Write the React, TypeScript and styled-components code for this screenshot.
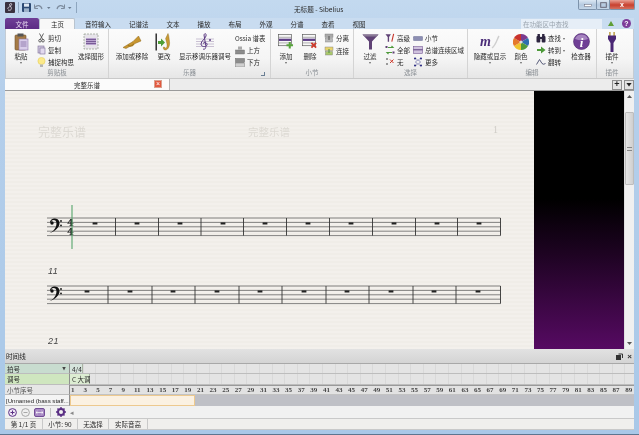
import React from "react";
import styled, { createGlobalStyle } from "styled-components";

const Global = createGlobalStyle`
  html, body { margin: 0; padding: 0; background: #b9d2ec; }
  body { font-family: "Noto Sans CJK SC", "Liberation Sans", sans-serif; font-size: 6.5px; color: #2a2a2a; }
  * { box-sizing: border-box; }
`;

const Window = styled.div`
  width: 639px; height: 435px; overflow: hidden;
  display: flex; flex-direction: column;
  padding: 0 5px 4px 5px;
  background: linear-gradient(180deg, #c3d9ef 0%, #b5cfeb 20%, #a9c8e8 100%);
  border-bottom: 1px solid #5d7690;
  filter: blur(0.3px);
`;

const TitleBar = styled.div`
  height: 18px; flex: none; display: flex; align-items: flex-start; position: relative;
`;
const Quick = styled.div`
  display: flex; align-items: center; gap: 3px; height: 14px; padding-top: 1px;
`;
const QuickSep = styled.div`
  width: 1px; height: 11px; background: #8ea6bf;
`;
const WindowTitle = styled.div`
  position: absolute; left: 289px; top: 4px; font-size: 6.6px; color: #2a2a2a; white-space: nowrap;
`;
const Caption = styled.div`
  margin-left: auto; display: flex; height: 10px; margin-right: -1px;
`;
const CapBtn = styled.div<{ $w: number; $red?: boolean }>`
  width: ${p => p.$w}px; height: 10px; display: flex; align-items: center; justify-content: center;
  border: 1px solid #7d93ab; border-top: none; margin-left: -1px;
  background: ${p => p.$red ? "linear-gradient(180deg,#e9a195,#c8402f 55%,#d4705f)" : "linear-gradient(180deg,#dbe7f3,#b4c9df 55%,#c4d6e8)"};
  border-radius: 0 0 2px 2px; color: #fff; font-size: 7px; font-weight: bold;
  font-family: "Liberation Sans", sans-serif;
`;

const TabRow = styled.div`
  height: 11px; flex: none; display: flex; align-items: stretch; position: relative;
  background: #c9dcf0;
`;
const FileTab = styled.div`
  width: 34px; display: flex; align-items: center; justify-content: center;
  background: linear-gradient(180deg, #6f3f96, #5d2c85); color: #eadcf2; border-radius: 2px 2px 0 0;
`;
const Tab = styled.div<{ $active?: boolean }>`
  display: flex; align-items: center; padding: 0 ${p => p.$active ? "10px" : "9px"};
  padding-left: ${p => p.$active ? "11px" : "9px"};
  color: #2a2a2a;
  background: ${p => p.$active ? "#f8f8f8" : "transparent"};
  border-radius: 2px 2px 0 0;
  ${p => p.$active ? "border:1px solid #b9c4cf;border-bottom:none;margin-right:1px;" : ""}
`;
const SearchArea = styled.div`
  margin-left: auto; display: flex; align-items: center; gap: 3px;
`;
const SearchBox = styled.div`
  width: 81px; height: 10px; background: #e6eef7; color: #9aa4ae; padding-left: 2px;
  display: flex; align-items: center;
`;
const Help = styled.div`
  width: 9px; height: 9px; border-radius: 50%; background: #7d3c9a; color: #fff;
  display: flex; align-items: center; justify-content: center; font-size: 7px; font-weight: bold;
  font-family: "Liberation Sans", sans-serif; margin-left: 5px; margin-right: 3px;
`;
const UpTri = styled.div`
  width: 0; height: 0; margin-left: 3px; border-left: 3.5px solid transparent; border-right: 3.5px solid transparent;
  border-bottom: 5px solid #5f9e35;
`;

const Ribbon = styled.div`
  height: 49px; flex: none; display: flex;
  background: linear-gradient(180deg, #fbfbfb 0%, #f5f5f5 60%, #e6e6e6 100%);
  border-left: 1px solid #c4ccd4; border-right: 1px solid #c4ccd4;
`;
const Group = styled.div<{ $w: number; $nosep?: boolean }>`
  width: ${p => p.$w}px; flex: none; display: flex; flex-direction: column; position: relative;
  border-right: ${p => p.$nosep ? "none" : "1px solid #d4d4d4"};
`;
const GroupBody = styled.div<{ $pl?: number }>`
  flex: 1; display: flex; padding-top: 3px; padding-left: ${p => p.$pl ?? 0}px; min-height: 0;
`;
const GroupLabel = styled.div`
  height: 10px; flex: none; text-align: center; line-height: 9px; color: #8a8f94;
`;
const Launcher = styled.div`
  position: absolute; right: 5px; bottom: 2px; width: 4px; height: 4px;
  border-right: 1px solid #6a7f94; border-bottom: 1px solid #6a7f94;
`;
const Big = styled.div<{ $w: number }>`
  width: ${p => p.$w}px; flex: none; display: flex; flex-direction: column; align-items: center;
`;
const BigIcon = styled.div`
  height: 19px; display: flex; align-items: center; justify-content: center;
`;
const BigText = styled.div`
  height: 10px; line-height: 10px; white-space: nowrap; color: #2a2a2a;
`;
const Caret = styled.div`
  width: 0; height: 0; margin-top: 1px;
  border-left: 1.5px solid transparent; border-right: 1.5px solid transparent; border-top: 2px solid #666;
`;
const Col = styled.div<{ $w: number; $ml?: number }>`
  width: ${p => p.$w}px; flex: none; margin-left: ${p => p.$ml ?? 0}px; display: flex; flex-direction: column;
`;
const Small = styled.div`
  height: 12.5px; display: flex; align-items: center; gap: 2px; white-space: nowrap; color: #2a2a2a;
`;
const Ossia = styled(Small)`
  font-size: 6.4px;
`;
const SmallIcon = styled.div`
  width: 10px; height: 10px; flex: none; display: flex; align-items: center; justify-content: center;
`;

const DocBar = styled.div`
  height: 13px; flex: none; display: flex; align-items: stretch;
  background: #ececec; border-top: 1px solid #c9c9c9; border-bottom: 1px solid #9a9a9a;
`;
const DocTab = styled.div`
  width: 165px; background: #fbfbfb; border-right: 1px solid #b5b5b5; position: relative;
  display: flex; align-items: center; justify-content: center; padding-right: 0;
`;
const DocClose = styled.div`
  position: absolute; left: 149px; top: 1px; width: 8px; height: 8px; background: #e2583e; border: 1px solid #d9a08f;
  color: #fff; font-size: 7px; line-height: 6px; text-align: center; font-family: "Liberation Sans", sans-serif;
`;
const DocTools = styled.div`
  margin-left: auto; display: flex; gap: 2px; align-items: center;
`;
const DocBtn = styled.div`
  width: 10px; height: 10px; background: #e3e3e3; border: 1px solid #8f8f8f; color: #222;
  display: flex; align-items: center; justify-content: center; font-size: 9px; font-weight: bold;
  font-family: "Liberation Sans", sans-serif; line-height: 1;
`;
const DownTri = styled.div`
  width: 6px; height: 4px; background: #222; clip-path: polygon(0 0, 100% 0, 50% 100%);
`;

const Workspace = styled.div`
  height: 258px; flex: none; display: flex; overflow: hidden;
`;
const Page = styled.div`
  width: 529px; flex: none; overflow: hidden; display: flex; flex-direction: column;
  background: repeating-linear-gradient(180deg, #f3f0ec 0, #f3f0ec 2px, #f0ede8 2px, #f0ede8 4px);
`;
const PageHead = styled.div`
  margin-top: 32px; height: 16px; flex: none; display: flex; align-items: center; color: #dfdcd6; position: relative;
`;
const HeadLeft = styled.div`
  margin-left: 33px; width: 210px; font-size: 12px; color: #dcd9d3;
`;
const HeadMid = styled.div`
  font-size: 10.5px; color: #dcd9d3;
`;
const HeadNum = styled.div`
  margin-left: auto; margin-right: 36px; font-size: 10px; margin-top: -4px; color: #cfccc6;
  font-family: "Liberation Serif", serif;
`;
const BarNo = styled.div<{ $mt: number }>`
  margin: ${p => p.$mt}px 0 0 43px; height: 12px; flex: none; font-size: 9px; font-style: italic; line-height: 12px;
  font-family: "Liberation Sans", sans-serif; color: #444; letter-spacing: 0.5px;
`;
const StaffSvg = styled.svg<{ $mt?: number }>`
  display: block; flex: none; margin-top: ${p => p.$mt ?? 0}px;
`;
const Panel = styled.div`
  width: 90px; flex: none; background: linear-gradient(180deg, #000 0%, #000 42%, #1c0320 62%, #560a62 100%);
`;
const Scroll = styled.div`
  width: 10px; flex: none; background: #f0f0f0; display: flex; flex-direction: column; align-items: center; border-left: 1px solid #e0e0e0;
`;
const ScrollArrow = styled.div<{ $down?: boolean }>`
  width: 5px; height: 3px; margin: ${p => p.$down ? "auto 0 4px" : "4px 0 0"}; background: #555;
  clip-path: ${p => p.$down ? "polygon(0 0,100% 0,50% 100%)" : "polygon(50% 0,100% 100%,0 100%)"};
`;
const ScrollThumb = styled.div`
  width: 9px; height: 73px; margin-top: 14px; background: linear-gradient(90deg, #e6e6e6, #cfcfcf);
  border: 1px solid #bdbdbd; border-radius: 1px; display: flex; align-items: center; justify-content: center;
`;
const Grip = styled.div`
  width: 5px; height: 4px; border-top: 1px solid #888; border-bottom: 1px solid #888;
`;

const Timeline = styled.div`
  height: 70px; flex: none; display: flex; flex-direction: column; background: #f0f0f0;
`;
const TimelineHead = styled.div`
  height: 15px; flex: none; display: flex; align-items: center; padding-left: 1px;
  background: linear-gradient(180deg, #e2e2e2, #d4d4d4); border-bottom: 1px solid #a8a8a8; color: #222;
  font-size: 6.6px;
`;
const HeadTools = styled.div`
  margin-left: auto; display: flex; gap: 4px; padding-right: 2px; align-items: center; color: #333;
  font-family: "Liberation Sans", sans-serif; font-size: 8px; font-weight: bold;
`;
const TRow = styled.div<{ $h: number }>`
  height: ${p => p.$h}px; flex: none; display: flex; align-items: stretch;
`;
const TLabel = styled.div<{ $bg: string; $c?: string }>`
  width: 65px; flex: none; background: ${p => p.$bg}; color: ${p => p.$c ?? "#2a2a2a"}; display: flex; align-items: center;
  padding-left: 2px; border-right: 1px solid #8f8f8f; border-bottom: 1px solid #bdbdbd; white-space: nowrap; overflow: hidden;
`;
const StaffName = styled(TLabel)`
  font-family: "Liberation Sans", sans-serif; font-size: 6.2px; padding-left: 1px; letter-spacing: -0.05px;
`;
const FilterMark = styled.div`
  margin-left: auto; margin-right: 3px; width: 4px; height: 4px; background: #444; clip-path: polygon(0 0, 100% 0, 50% 100%);
`;
const Track = styled.div`
  flex: 1; display: flex; align-items: stretch; border-bottom: 1px solid #bdbdbd;
  background-color: #e4e4e4;
  background-image: repeating-linear-gradient(90deg, #d9d9d9 0, #d9d9d9 1px, transparent 1px, transparent 12.6px);
`;
const Chip = styled.div<{ $w: number; $bg: string }>`
  width: ${p => p.$w}px; background: ${p => p.$bg}; border-right: 1px solid #a9b5a4; display: flex; align-items: center; padding-left: 2px; color: #2a2a2a; white-space: nowrap;
`;
const Numbers = styled.div`
  flex: 1; display: flex; background: #e2e2e2; border-top: 1px solid #9a9a9a; border-bottom: 1px solid #c3c3c3; overflow: hidden;
`;
const Num = styled.div`
  width: 12.6px; flex: none; padding-left: 1px; line-height: 9px; color: #444; font-weight: bold; font-size: 7px; letter-spacing: 0;
  font-family: "Liberation Serif", serif;
`;
const Clip = styled.div`
  width: 125px; flex: none; background: #fbf1e2; border: 1px solid #edc98f;
`;
const ClipRest = styled.div`
  flex: 1; background: #bfc0c6;
`;
const ToolRow = styled.div`
  height: 13px; flex: none; display: flex; align-items: center; padding-left: 3px; gap: 4px;
  background: #f1f1f1; border-bottom: 1px solid #c9c9c9; color: #888;
`;
const ToolSep = styled.div`
  width: 1px; height: 9px; background: #c2c2c2; margin: 0 1px;
`;
const Status = styled.div`
  height: 11px; flex: none; display: flex; background: #f0efed; border-bottom: 1px solid #c9c9c9;
`;
const StatusCell = styled.div<{ $w: number }>`
  width: ${p => p.$w}px; flex: none; display: flex; align-items: center; justify-content: center;
  border-right: 1px solid #c9c9c9; color: #2a2a2a; white-space: nowrap;
`;

/* ---------- icons ---------- */
const Clipboard = () => (
  <svg width="15" height="18" viewBox="0 0 15 18">
    <rect x="1" y="2" width="11" height="15" rx="1" fill="#a57b47" stroke="#6f5230" strokeWidth=".6" />
    <rect x="3.5" y="0.5" width="6" height="3" fill="#555" />
    <rect x="5" y="6" width="9" height="11" fill="#d9cdea" stroke="#8b76a8" strokeWidth=".6" />
    <path d="M6.5 9h6M6.5 11h6M6.5 13h6" stroke="#7d64a0" strokeWidth=".8" />
  </svg>
);
const Scissors = () => (
  <svg width="9" height="10" viewBox="0 0 9 10" fill="none" stroke="#555" strokeWidth=".9">
    <path d="M2.5 0.5L5.5 6M6.5 0.5L3.5 6" />
    <circle cx="3" cy="7.7" r="1.3" />
    <circle cx="6" cy="7.7" r="1.3" />
  </svg>
);
const Copy = () => (
  <svg width="9" height="10" viewBox="0 0 9 10">
    <rect x="1" y="1" width="6" height="7" fill="#cfc6de" stroke="#7e6f96" strokeWidth=".6" />
    <rect x="3" y="3" width="5" height="6" fill="#e2d9ee" stroke="#7e6f96" strokeWidth=".6" />
  </svg>
);
const Bulb = () => (
  <svg width="9" height="11" viewBox="0 0 9 11">
    <circle cx="4.5" cy="4" r="3.6" fill="#fbe98a" stroke="#e1c94f" strokeWidth=".5" />
    <rect x="3" y="7.5" width="3" height="2.5" fill="#b4b4b4" />
  </svg>
);
const SelectGraphic = () => (
  <svg width="16" height="17" viewBox="0 0 16 17">
    <rect x="1" y="1" width="14" height="15" fill="#e7e4ea" stroke="#8f9c8a" strokeWidth=".7" strokeDasharray="2 1" />
    <rect x="3" y="5" width="10" height="7" fill="#b9a3cf" />
    <path d="M3 6.5h10M3 8.5h10M3 10.5h10" stroke="#5b3e7c" strokeWidth=".7" />
  </svg>
);
const Trumpet = () => (
  <svg width="20" height="14" viewBox="0 0 20 14">
    <path d="M1 12.5L11 6.5L16.5 1L19 6L13 8.5L4 13.5Z" fill="#c8962f" stroke="#8c6516" strokeWidth=".5" />
    <path d="M6 10q3 2.5 6 -1" stroke="#a57a1f" strokeWidth="1.2" fill="none" />
  </svg>
);
const ChangeInst = () => (
  <svg width="18" height="18" viewBox="0 0 18 18">
    <rect x="0.5" y="0.5" width="1.4" height="17" fill="#222" />
    <path d="M3 8h3V5.5L10 9.5L6 13.5V11H3Z" fill="#4f9e38" />
    <path d="M13 0.5c1 2 1 5 1.5 8c.5 4 -1 8 -4 8.5c-2 .3 -2.5 -2 -2 -3l1.5 .5c0 1 1.5 1 2 -1c.5 -2 -.5 -4 -1.4 -8z" fill="#c99a34" stroke="#86651a" strokeWidth=".4" />
  </svg>
);
const Transpose = () => (
  <svg width="18" height="18" viewBox="0 0 18 18" fill="none">
    <path d="M0 6h18M0 8.5h18M0 11h18M0 13.5h18" stroke="#a99bb9" strokeWidth=".6" />
    <path d="M7 16c2 1 3.5 -1 2.5 -5L8 2c.5 -2 2.5 -2 2 1c-.4 2.5 -5 5 -5 8c0 3 5 3.5 6 1c.8 -2 -2.5 -3.5 -4 -1.5" stroke="#5b3a82" strokeWidth="1" />
    <circle cx="14" cy="7" r="1" fill="#5b3a82" />
  </svg>
);
const StaffUp = ({ down }: { down?: boolean }) => (
  <svg width="10" height="9" viewBox="0 0 10 9">
    {down ? <rect x="0.5" y="0.5" width="9" height="4" fill="#8c8c8c" stroke="#555" strokeWidth=".4" /> : <rect x="3" y="0.5" width="4" height="3" fill="#aaa" />}
    <rect x="0.5" y={down ? 5 : 4} width="9" height="4" fill={down ? "#cfcfcf" : "#8c8c8c"} stroke="#666" strokeWidth=".4" />
  </svg>
);
const BarIcon = ({ del }: { del?: boolean }) => (
  <svg width="16" height="15" viewBox="0 0 17 16">
    <rect x="0.5" y="0.5" width="14" height="12" fill="#f7f7f7" stroke="#555" strokeWidth=".7" />
    <path d="M1 3.5h13M1 9.5h13" stroke="#777" strokeWidth=".6" />
    <rect x="1" y="5" width="13" height="2.4" fill="#5d3d86" />
    {del
      ? <path d="M10 9.5l5 5M15 9.5l-5 5" stroke="#cf3a2c" strokeWidth="2" />
      : <path d="M12.5 8.5v7M9 12h7" stroke="#58a33c" strokeWidth="2.2" />}
  </svg>
);
const SplitIcon = ({ join }: { join?: boolean }) => (
  <svg width="10" height="10" viewBox="0 0 10 10">
    <rect x="1" y="1" width="8" height="3.5" fill={join ? "#e7d36d" : "#a9a9a9"} stroke="#777" strokeWidth=".4" />
    <rect x="1.5" y="5.5" width="7" height="3.5" fill={join ? "#a9c86b" : "#b9b9b9"} stroke="#777" strokeWidth=".4" />
    <path d="M5 3v4" stroke={join ? "#4f8f35" : "#555"} strokeWidth="1" />
  </svg>
);
const Funnel = () => (
  <svg width="17" height="17" viewBox="0 0 17 17">
    <path d="M0.5 1.5h16L10 8.5V16.5H7V8.5Z" fill="#5f4275" />
    <path d="M0.5 1.5h16l-2 2H2.5Z" fill="#8a7a96" />
  </svg>
);
const Advanced = () => (
  <svg width="11" height="10" viewBox="0 0 11 10">
    <path d="M0.5 1h6L4.5 4v5H3V4Z" fill="#5f4275" />
    <path d="M9.5 0.5L7.5 9" stroke="#c7332a" strokeWidth="1.2" />
  </svg>
);
const AllIcon = () => (
  <svg width="10" height="10" viewBox="0 0 10 10" fill="none">
    <path d="M3 2.5h5l-1.5-1.5M7 7.5H2l1.5 1.5" stroke="#4e9a3a" strokeWidth="1.1" />
    <rect x="0.5" y="1" width="2" height="2" fill="#5f4275" />
    <rect x="7.5" y="6.5" width="2" height="2" fill="#5f4275" />
  </svg>
);
const NoneIcon = () => (
  <svg width="10" height="10" viewBox="0 0 10 10">
    <rect x="1" y="1" width="2" height="2" fill="#999" />
    <rect x="1" y="6" width="2" height="2" fill="#999" />
    <path d="M5 2.5l3.5 3.5M8.5 2.5L5 6" stroke="#cf3a2c" strokeWidth="1" />
  </svg>
);
const MiniBar = () => (
  <svg width="10" height="5" viewBox="0 0 10 5"><rect x="0.3" y="0.3" width="9.4" height="4.4" rx="1" fill="#8d8fb3" stroke="#6f7196" strokeWidth=".4" /></svg>
);
const ScoreRange = () => (
  <svg width="10" height="8" viewBox="0 0 10 8">
    <rect x="0.3" y="0.3" width="9.4" height="7.4" fill="#cfc2de" stroke="#6c4f8c" strokeWidth=".5" />
    <path d="M0.3 3.8h9.4" stroke="#5c3f7e" strokeWidth="1" />
  </svg>
);
const MoreIcon = () => (
  <svg width="10" height="10" viewBox="0 0 10 10">
    <path d="M2 1L8 5L2 9M8 1L2 5L8 9" stroke="#23237e" strokeWidth=".6" fill="none" strokeDasharray="1 .7" />
    <circle cx="2" cy="1.5" r="1" fill="#23237e" /><circle cx="8" cy="1.5" r="1" fill="#23237e" />
    <circle cx="2" cy="8.5" r="1" fill="#23237e" /><circle cx="8" cy="8.5" r="1" fill="#23237e" />
  </svg>
);
const Dyn = () => (
  <svg width="20" height="14" viewBox="0 0 20 14">
    <path d="M12 13C16 10 17 4 19 1" stroke="#cfcfcf" strokeWidth="1.4" fill="none" />
    <text x="0" y="11" fontFamily="Liberation Serif, serif" fontStyle="italic" fontWeight="bold" fontSize="14" fill="#4b2d78">m</text>
  </svg>
);
const Wheel = () => (
  <svg width="16" height="16" viewBox="0 0 16 16">
    <path d="M8 8L8 0A8 8 0 0 1 15 4Z" fill="#7a3b8f" />
    <path d="M8 8L15 4A8 8 0 0 1 15 12Z" fill="#2f6fb0" />
    <path d="M8 8L15 12A8 8 0 0 1 8 16Z" fill="#4f9a3c" />
    <path d="M8 8L8 16A8 8 0 0 1 1 12Z" fill="#f0c52e" />
    <path d="M8 8L1 12A8 8 0 0 1 1 4Z" fill="#e5792a" />
    <path d="M8 8L1 4A8 8 0 0 1 8 0Z" fill="#c9332c" />
    <circle cx="8" cy="8" r="1.6" fill="#ddd" />
  </svg>
);
const Binoc = () => (
  <svg width="10" height="9" viewBox="0 0 10 9" fill="#2d2540">
    <rect x="0.5" y="2" width="3.8" height="6.5" rx="1" /><rect x="5.7" y="2" width="3.8" height="6.5" rx="1" />
    <rect x="1.5" y="0" width="2.4" height="3" /><rect x="6.1" y="0" width="2.4" height="3" /><rect x="4" y="3" width="2" height="2" />
  </svg>
);
const GoArrow = () => (
  <svg width="10" height="8" viewBox="0 0 10 8"><path d="M1 3h4V0.5L9.5 4L5 7.5V5H1Z" fill="#4e9a3a" /></svg>
);
const Flip = () => (
  <svg width="10" height="8" viewBox="0 0 10 8" fill="none">
    <path d="M0.5 6.5L3.5 1.5L6 5.5Q7.5 7 9.5 5.5" stroke="#454a6b" strokeWidth=".9" />
  </svg>
);
const Info = () => (
  <svg width="17" height="17" viewBox="0 0 17 17">
    <circle cx="8.5" cy="8.5" r="8" fill="#6f3f95" stroke="#4d2a6d" strokeWidth=".6" />
    <path d="M2 6A7 7 0 0 1 15 6Q8.5 8.5 2 6Z" fill="#a583bf" />
    <text x="8.5" y="13.5" textAnchor="middle" fontFamily="Liberation Serif, serif" fontStyle="italic" fontWeight="bold" fontSize="13" fill="#fff">i</text>
  </svg>
);
const Plug = () => (
  <svg width="8" height="20" viewBox="0 0 8 20">
    <rect x="1.2" y="0" width="1.4" height="4" fill="#b8983a" /><rect x="5.4" y="0" width="1.4" height="4" fill="#b8983a" />
    <path d="M0 3.5h8v3.5L5.5 11v9h-3V11L0 7Z" fill="#4a2775" />
  </svg>
);
const CircleBtn = ({ minus, on }: { minus?: boolean; on?: boolean }) => (
  <svg width="9" height="9" viewBox="0 0 9 9">
    <circle cx="4.5" cy="4.5" r="3.9" fill={on ? "#efe7f5" : "#efefef"} stroke={on ? "#5a2f84" : "#a8a8a8"} strokeWidth="1" />
    <path d={minus ? "M2.5 4.5h4" : "M2.5 4.5h4M4.5 2.5v4"} stroke={on ? "#5a2f84" : "#a8a8a8"} strokeWidth="1" />
  </svg>
);
const Stretch = () => (
  <svg width="11" height="9" viewBox="0 0 11 9">
    <rect x="0.5" y="0.5" width="10" height="8" rx="1.5" fill="#a88ac4" stroke="#5a2f84" strokeWidth=".8" />
    <path d="M2 4.5h7M2 4.5l1.5-1.4M2 4.5l1.5 1.4M9 4.5l-1.5-1.4M9 4.5l-1.5 1.4" stroke="#fff" strokeWidth=".7" fill="none" />
  </svg>
);
const Gear = () => (
  <svg width="10" height="10" viewBox="0 0 10 10">
    <circle cx="5" cy="5" r="3" fill="none" stroke="#5a2f84" strokeWidth="2" />
    <path d="M5 0v2M5 8v2M0 5h2M8 5h2M1.5 1.5l1.4 1.4M7.1 7.1l1.4 1.4M8.5 1.5L7.1 2.9M2.9 7.1L1.5 8.5" stroke="#5a2f84" strokeWidth="1.4" />
  </svg>
);
const Floppy = () => (
  <svg width="9" height="9" viewBox="0 0 9 9">
    <rect width="9" height="9" rx="1" fill="#2d4a73" />
    <rect x="2" y="0.5" width="5" height="3.2" fill="#dfe8f2" />
    <rect x="2" y="5.3" width="5" height="3.7" fill="#9db2c9" />
  </svg>
);
const AppIcon = () => (
  <svg width="10" height="11" viewBox="0 0 10 11">
    <rect width="10" height="11" rx="1" fill="#3a3340" />
    <path d="M3 8c3 1 4-1 3-3L4.5 3c0-2 3-2 2 0S2 5 3 7" stroke="#d8d2de" strokeWidth=".9" fill="none" />
  </svg>
);
const Undo = ({ redo }: { redo?: boolean }) => (
  <svg width="18" height="9" viewBox="0 0 18 9" fill="none">
    <path d={redo ? "M9 4.5C7 1.5 3 2 2 6" : "M1 4.5C3 1.5 7 2 8 6"} stroke="#7d8c9e" strokeWidth="1.2" />
    <path d={redo ? "M9.5 1.5V5.5H6" : "M.5 1.5V5.5H4"} stroke="#7d8c9e" strokeWidth="1" />
    <path d="M13 4h3.5l-1.75 2z" fill="#6a7b8e" />
  </svg>
);
const MinGlyph = () => (
  <svg width="8" height="5" viewBox="0 0 8 5"><rect x="0.5" y="2.5" width="7" height="2" fill="#fff" stroke="#667" strokeWidth=".5" /></svg>
);
const MaxGlyph = () => (
  <svg width="7" height="6" viewBox="0 0 7 6"><rect x="0.7" y="0.7" width="5.6" height="4.6" fill="none" stroke="#667" strokeWidth="1" /></svg>
);
const Restore = () => (
  <svg width="7" height="7" viewBox="0 0 7 7" fill="none" stroke="#333">
    <rect x="0.5" y="2.5" width="4" height="4" fill="#333" /><path d="M2.5 1h4v4" />
  </svg>
);

/* ---------- score ---------- */
const Staff = ({ top, height, bars, rests, first, mt }: { top: number; height: number; bars: number[]; rests: number[]; first?: boolean; mt?: number }) => {
  const lines = [0, 1, 2, 3, 4].map(i => top + i * 4.4);
  return (
    <StaffSvg $mt={mt} width="529" height={height} viewBox={`0 0 529 ${height}`}>
      {lines.map(y => <line key={y} x1="42" x2="495.5" y1={y} y2={y} stroke="#666" strokeWidth=".8" />)}
      {bars.map(x => <line key={x} x1={x} x2={x} y1={top} y2={top + 17.6} stroke="#333" strokeWidth=".9" />)}
      {rests.map(x => <rect key={x} x={x - 2.4} y={top + 4.4} width="4.8" height="2.1" fill="#222" />)}
      <g transform={`translate(-5 ${top - 218})`}>
        <path d="M50 222.5C50 218.7 55 217.4 57.6 219.2C60.6 221.3 60 226 56.6 229C54.5 231 52 232.4 49.4 233.2C52.4 231.5 55 229.4 56 226.4C57 223.4 56.6 220 53.6 220C52.2 220 51 220.9 51.4 222Z" fill="#111" />
        <circle cx="52" cy="223" r="1.7" fill="#111" />
        <circle cx="61" cy="221" r=".9" fill="#111" />
        <circle cx="61" cy="225.4" r=".9" fill="#111" />
      </g>
      {first && (
        <>
          <text x="62" y={top + 8.2} fontFamily="DejaVu Serif, serif" fontWeight="bold" fontSize="10" fill="#111">4</text>
          <text x="62" y={top + 17.2} fontFamily="DejaVu Serif, serif" fontWeight="bold" fontSize="10" fill="#111">4</text>
          <line x1="67" x2="67" y1="5" y2={height - 6} stroke="#55a56b" strokeWidth="1.1" />
        </>
      )}
    </StaffSvg>
  );
};

const tabs = ["音符输入", "记谱法", "文本", "播放", "布局", "外观", "分谱", "查看", "视图"];
const nums = Array.from({ length: 45 }, (_, i) => 2 * i + 1);

export default function App() {
  return (
    <>
      <Global />
      <Window>
        <TitleBar>
          <Quick>
            <AppIcon />
            <QuickSep />
            <Floppy />
            <Undo />
            <Undo redo />
            <QuickSep />
          </Quick>
          <WindowTitle>无标题 - Sibelius</WindowTitle>
          <Caption>
            <CapBtn $w={19}><MinGlyph /></CapBtn>
            <CapBtn $w={14}><MaxGlyph /></CapBtn>
            <CapBtn $w={26} $red>x</CapBtn>
          </Caption>
        </TitleBar>
        <TabRow>
          <FileTab>文件</FileTab>
          <Tab $active>主页</Tab>
          {tabs.map(t => <Tab key={t}>{t}</Tab>)}
          <SearchArea>
            <SearchBox>在功能区中查找</SearchBox>
            <UpTri />
            <Help>?</Help>
          </SearchArea>
        </TabRow>
        <Ribbon>
          <Group $w={103}>
            <GroupBody $pl={1}>
              <Big $w={28}><BigIcon><Clipboard /></BigIcon><BigText>粘贴</BigText><Caret /></Big>
              <Col $w={40} $ml={1}>
                <Small><SmallIcon><Scissors /></SmallIcon>剪切</Small>
                <Small><SmallIcon><Copy /></SmallIcon>复制</Small>
                <Small><SmallIcon><Bulb /></SmallIcon>捕捉构思</Small>
              </Col>
              <Big $w={30}><BigIcon><SelectGraphic /></BigIcon><BigText>选择图形</BigText></Big>
            </GroupBody>
            <GroupLabel>剪贴板</GroupLabel>
          </Group>
          <Group $w={162}>
            <GroupBody $pl={5}>
              <Big $w={36}><BigIcon><Trumpet /></BigIcon><BigText>添加或移除</BigText></Big>
              <Big $w={28}><BigIcon><ChangeInst /></BigIcon><BigText>更改</BigText></Big>
              <Big $w={54}><BigIcon><Transpose /></BigIcon><BigText>显示移调乐器调号</BigText></Big>
              <Col $w={36} $ml={3}>
                <Ossia>Ossia 谱表</Ossia>
                <Small><SmallIcon><StaffUp /></SmallIcon>上方</Small>
                <Small><SmallIcon><StaffUp down /></SmallIcon>下方</Small>
              </Col>
            </GroupBody>
            <GroupLabel>乐器</GroupLabel>
            <Launcher />
          </Group>
          <Group $w={83}>
            <GroupBody $pl={3}>
              <Big $w={24}><BigIcon><BarIcon /></BigIcon><BigText>添加</BigText><Caret /></Big>
              <Big $w={24}><BigIcon><BarIcon del /></BigIcon><BigText>删除</BigText></Big>
              <Col $w={30} $ml={2}>
                <Small><SmallIcon><SplitIcon /></SmallIcon>分离</Small>
                <Small><SmallIcon><SplitIcon join /></SmallIcon>连接</Small>
              </Col>
            </GroupBody>
            <GroupLabel>小节</GroupLabel>
          </Group>
          <Group $w={114}>
            <GroupBody $pl={3}>
              <Big $w={26}><BigIcon><Funnel /></BigIcon><BigText>过滤</BigText><Caret /></Big>
              <Col $w={26} $ml={2}>
                <Small><SmallIcon><Advanced /></SmallIcon>高级</Small>
                <Small><SmallIcon><AllIcon /></SmallIcon>全部</Small>
                <Small><SmallIcon><NoneIcon /></SmallIcon>无</Small>
              </Col>
              <Col $w={54} $ml={2}>
                <Small><SmallIcon><MiniBar /></SmallIcon>小节</Small>
                <Small><SmallIcon><ScoreRange /></SmallIcon>总谱连续区域</Small>
                <Small><SmallIcon><MoreIcon /></SmallIcon>更多</Small>
              </Col>
            </GroupBody>
            <GroupLabel>选择</GroupLabel>
          </Group>
          <Group $w={129}>
            <GroupBody $pl={5}>
              <Big $w={34}><BigIcon><Dyn /></BigIcon><BigText>隐藏或显示</BigText><Caret /></Big>
              <Big $w={28}><BigIcon><Wheel /></BigIcon><BigText>颜色</BigText><Caret /></Big>
              <Col $w={33} $ml={1}>
                <Small><SmallIcon><Binoc /></SmallIcon>查找 <Caret /></Small>
                <Small><SmallIcon><GoArrow /></SmallIcon>转到 <Caret /></Small>
                <Small><SmallIcon><Flip /></SmallIcon>翻转</Small>
              </Col>
              <Big $w={24}><BigIcon><Info /></BigIcon><BigText>检查器</BigText></Big>
            </GroupBody>
            <GroupLabel>编辑</GroupLabel>
          </Group>
          <Group $w={30} $nosep>
            <GroupBody $pl={2}>
              <Big $w={26}><BigIcon><Plug /></BigIcon><BigText>插件</BigText><Caret /></Big>
            </GroupBody>
            <GroupLabel>插件</GroupLabel>
          </Group>
        </Ribbon>
        <DocBar>
          <DocTab>完整乐谱<DocClose>×</DocClose></DocTab>
          <DocTools>
            <DocBtn>+</DocBtn>
            <DocBtn><DownTri /></DocBtn>
          </DocTools>
        </DocBar>
        <Workspace>
          <Page>
            <PageHead>
              <HeadLeft>完整乐谱</HeadLeft>
              <HeadMid>完整乐谱</HeadMid>
              <HeadNum>1</HeadNum>
            </PageHead>
            <Staff mt={61} top={18} height={55} first
              bars={[110.5, 153.5, 196, 238.5, 281.5, 324.5, 367.5, 410.5, 452.5, 495.5]}
              rests={[90, 132, 175, 218, 260, 303, 346, 389, 432, 474]} />
            <BarNo $mt={10}>11</BarNo>
            <Staff top={9} height={40}
              bars={[103, 147, 190, 234, 277, 321, 364, 408, 451, 495.5]}
              rests={[82, 125, 168, 212, 255, 299, 342, 386, 429, 473]} />
            <BarNo $mt={18}>21</BarNo>
          </Page>
          <Panel />
          <Scroll>
            <ScrollArrow />
            <ScrollThumb><Grip /></ScrollThumb>
            <ScrollArrow $down />
          </Scroll>
        </Workspace>
        <Timeline>
          <TimelineHead>
            时间线
            <HeadTools><Restore />×</HeadTools>
          </TimelineHead>
          <TRow $h={10}>
            <TLabel $bg="#c8dccf">拍号<FilterMark /></TLabel>
            <Track><Chip $w={13} $bg="#d6e4dc">4/4</Chip></Track>
          </TRow>
          <TRow $h={11}>
            <TLabel $bg="#cfe6bf">调号</TLabel>
            <Track><Chip $w={20} $bg="#dcedd2">C 大调</Chip></Track>
          </TRow>
          <TRow $h={10}>
            <TLabel $bg="#e6e6e6" $c="#555">小节序号</TLabel>
            <Numbers>{nums.map(n => <Num key={n}>{n}</Num>)}</Numbers>
          </TRow>
          <TRow $h={11}>
            <StaffName $bg="#f4f4f4">[Unnamed (bass staff...</StaffName>
            <Clip />
            <ClipRest />
          </TRow>
          <ToolRow>
            <CircleBtn on />
            <CircleBtn minus />
            <Stretch />
            <ToolSep />
            <Gear />
            <span>◂</span>
          </ToolRow>
        </Timeline>
        <Status>
          <StatusCell $w={38}>第 1/1 页</StatusCell>
          <StatusCell $w={35}>小节: 90</StatusCell>
          <StatusCell $w={31}>无选择</StatusCell>
          <StatusCell $w={39}>实际音高</StatusCell>
        </Status>
      </Window>
    </>
  );
}
